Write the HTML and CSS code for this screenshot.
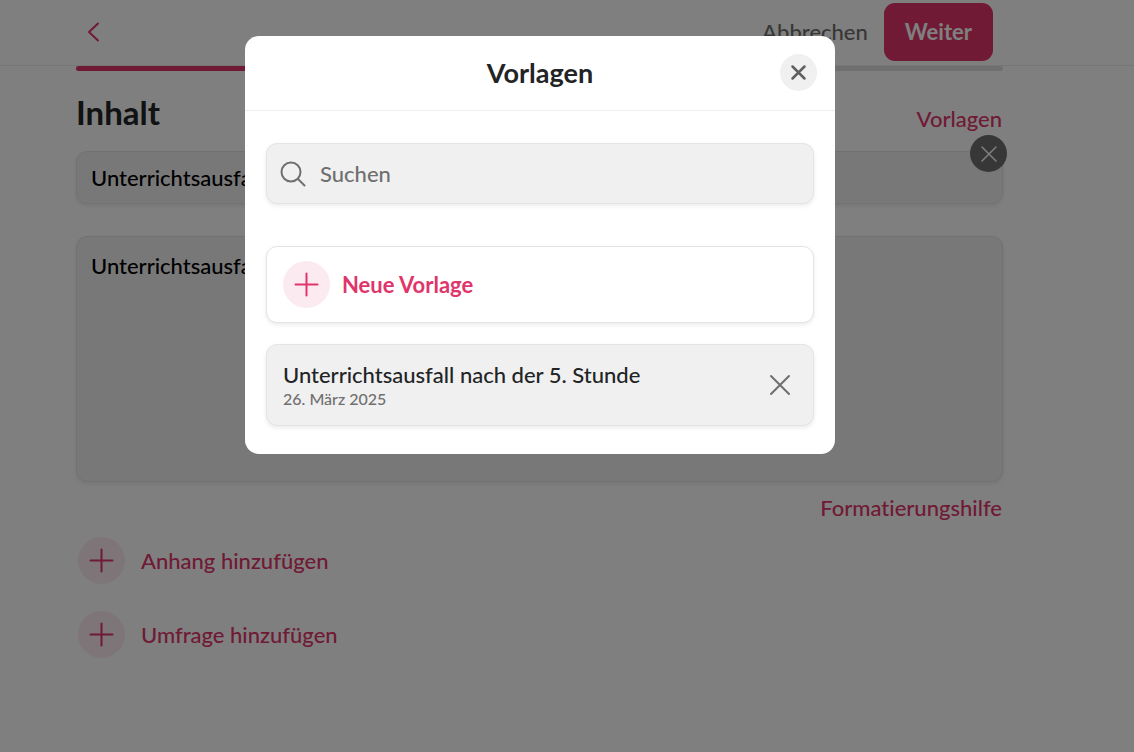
FILE: index.html
```html
<!DOCTYPE html>
<html lang="de">
<head>
<meta charset="utf-8">
<meta name="viewport" content="width=device-width, initial-scale=1">
<title>Vorlagen</title>
<link rel="stylesheet" href="styles.css">
</head>
<body>
<div class="page">
  <header class="topbar">
    <button class="icon-button back" type="button" aria-label="Zurück">
      <svg width="13" height="20" viewBox="0 0 13 20"><path d="M11 1.500 2 10l9 8.500"/></svg>
    </button>
    <div class="topbar-actions">
      <button class="cancel" type="button">Abbrechen</button>
      <button class="next" type="button">Weiter</button>
    </div>
  </header>
  <main class="content">
    <div class="progress"><div class="progress-fill"></div></div>
    <div class="title-row">
      <h1 class="title">Inhalt</h1>
      <a class="link" href="#">Vorlagen</a>
    </div>
    <div class="subject">
      <input class="field" type="text" aria-label="Betreff" value="Unterrichtsausfall">
      <button class="clear" type="button" aria-label="Löschen">
        <svg width="18" height="18" viewBox="0 0 18 18"><path d="m2 2 14 14M16 2 2 16"/></svg>
      </button>
    </div>
    <textarea class="field message" aria-label="Nachricht">Unterrichtsausfall</textarea>
    <a class="link help" href="#">Formatierungshilfe</a>
    <div class="extras">
      <button class="add" type="button">
        <span class="plus"><svg width="25" height="25" viewBox="0 0 25 25"><path d="M12.500 1.500v22M1.500 12.500h22"/></svg></span>
        Anhang hinzufügen
      </button>
      <button class="add" type="button">
        <span class="plus"><svg width="25" height="25" viewBox="0 0 25 25"><path d="M12.500 1.500v22M1.500 12.500h22"/></svg></span>
        Umfrage hinzufügen
      </button>
    </div>
  </main>
</div>
<div class="overlay">
  <section class="modal" role="dialog" aria-modal="true" aria-labelledby="modal-title">
    <header class="modal-header">
      <h2 class="modal-title" id="modal-title">Vorlagen</h2>
      <button class="close" type="button" aria-label="Schließen">
        <svg width="17" height="17" viewBox="0 0 17 17"><path d="m2.500 2.500 12 12M14.500 2.500l-12 12"/></svg>
      </button>
    </header>
    <div class="modal-body">
      <label class="card search">
        <svg width="26" height="26" viewBox="0 0 26 26"><circle cx="11" cy="11" r="9.500"/><path d="m18 18 6.500 6.500"/></svg>
        <input class="search-input" type="search" placeholder="Suchen" aria-label="Suchen">
      </label>
      <button class="card new-template" type="button">
        <span class="plus"><svg width="25" height="25" viewBox="0 0 25 25"><path d="M12.500 1.500v22M1.500 12.500h22"/></svg></span>
        Neue Vorlage
      </button>
      <div class="card template">
        <div class="template-text">
          <div class="template-name">Unterrichtsausfall nach der 5. Stunde</div>
          <div class="template-date">26. März 2025</div>
        </div>
        <button class="icon-button remove" type="button" aria-label="Vorlage löschen">
          <svg width="22" height="22" viewBox="0 0 22 22"><path d="m2 2 18 18M20 2 2 20"/></svg>
        </button>
      </div>
    </div>
  </section>
</div>
</body>
</html>
```
FILE: styles.css
```css
:root {
  --pink: #e0356b;
  --pink-soft: #fceaf1;
  --grey: #6f6f6f;
  --surface: #f0f0f0;
  --line: #e4e4e4;
  --shadow: 0 2px 4px rgba(0, 0, 0, 0.08);
}

* {
  box-sizing: border-box;
}

body {
  margin: 0;
  background: #fff;
  color: #222425;
  font: 500 22px/28px Lato, "Liberation Sans", sans-serif;
  font-variant-ligatures: none;
}

button,
input,
textarea {
  margin: 0;
  font: inherit;
  font-variant-ligatures: none;
  color: inherit;
}

button {
  padding: 0;
  border: 0;
  background: none;
  cursor: pointer;
}

svg {
  display: block;
  flex: none;
  fill: none;
  stroke: currentColor;
  stroke-width: 2;
  stroke-linecap: round;
  stroke-linejoin: round;
}

.topbar {
  display: flex;
  align-items: center;
  justify-content: space-between;
  padding: 3px 141px 4px 87px;
  border-bottom: 1px solid #ececec;
}

.icon-button {
  display: flex;
}

.back {
  color: var(--pink);
}

.topbar-actions {
  display: flex;
  align-items: center;
  gap: 16px;
}

.cancel {
  color: var(--grey);
}

.next {
  padding: 15px 21px;
  border-radius: 11px;
  background: var(--pink);
  color: #fff;
  font-weight: 700;
}

.content {
  padding: 0 131px 40px 76px;
}

.progress {
  height: 5px;
  border-radius: 3px;
  background: #dedede;
}

.progress-fill {
  width: 50%;
  height: 100%;
  border-radius: 3px;
  background: var(--pink);
}

.title-row {
  display: flex;
  align-items: flex-end;
  justify-content: space-between;
  padding: 20px 1px 18px 0;
}

.title {
  margin: 0;
  font-size: 33px;
  line-height: 42px;
  font-weight: 700;
}

.link {
  color: var(--pink);
  text-decoration: none;
}

.subject {
  position: relative;
}

.field {
  display: block;
  width: 100%;
  height: 53px;
  padding: 0 14px;
  border: 1px solid var(--line);
  border-radius: 11px;
  background: var(--surface);
  box-shadow: var(--shadow);
  color: #000;
  outline: 0;
}

.message {
  height: 246px;
  margin: 32px 0 12px;
  padding-top: 15px;
  resize: none;
}

.clear {
  position: absolute;
  top: -16px;
  right: -4px;
  display: grid;
  place-items: center;
  width: 37px;
  height: 37px;
  border-radius: 50%;
  background: var(--grey);
  color: #fff;
}

.clear svg {
  stroke-width: 1.5;
}

.help {
  display: block;
  width: fit-content;
  margin: 0 1px 0 auto;
}

.extras {
  display: grid;
  justify-items: start;
  gap: 27px;
  padding: 15px 2px;
}

.add {
  display: flex;
  align-items: center;
  gap: 16px;
  color: var(--pink);
}

.plus {
  display: grid;
  place-items: center;
  width: 47px;
  height: 47px;
  border-radius: 50%;
  background: var(--pink-soft);
}

.overlay {
  position: fixed;
  inset: 0;
  display: flex;
  align-items: flex-start;
  justify-content: center;
  padding: 36px 54px 36px 0;
  background: rgba(0, 0, 0, 0.5);
}

.modal {
  width: 100%;
  max-width: 590px;
  border-radius: 14px;
  background: #fff;
}

.modal-header {
  display: grid;
  grid-template-columns: 37px 1fr 37px;
  align-items: center;
  padding: 18px 18px 19px;
  border-bottom: 1px solid #eee;
}

.modal-title {
  grid-column: 2;
  margin: 0;
  font-size: 27px;
  line-height: 32px;
  font-weight: 700;
  text-align: center;
}

.close {
  display: grid;
  place-items: center;
  height: 37px;
  border-radius: 50%;
  background: var(--surface);
  color: #606060;
}

.close svg {
  stroke-width: 2.5;
}

.modal-body {
  display: grid;
  padding: 32px 21px 28px;
}

.card {
  display: flex;
  align-items: center;
  border: 1px solid var(--line);
  border-radius: 11px;
  background: var(--surface);
  box-shadow: var(--shadow);
}

.search {
  height: 61px;
  gap: 14px;
  padding: 0 13px;
  color: var(--grey);
}

.search-input {
  flex: 1;
  min-width: 0;
  padding: 0;
  border: 0;
  outline: 0;
  background: none;
}

.search-input::placeholder {
  color: var(--grey);
  opacity: 1;
}

.new-template {
  gap: 12px;
  margin: 42px 0 21px;
  padding: 14px 16px;
  background: #fff;
  color: var(--pink);
  font-weight: 700;
}

.template {
  justify-content: space-between;
  padding: 16px 22px 17px 16px;
}

.template-date {
  color: var(--grey);
  font-size: 16px;
  line-height: 19px;
}

.remove {
  color: var(--grey);
}
```
